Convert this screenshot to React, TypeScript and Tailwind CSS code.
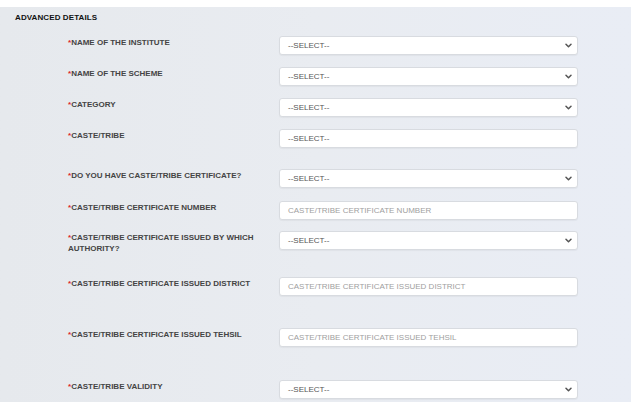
import React from "react";

type Row = {
  label: string;
  kind: "select" | "input" | "box";
  value: string;
  h: string;
};

const rows: Row[] = [
  { label: "NAME OF THE INSTITUTE", kind: "select", value: "--SELECT--", h: "h-[31px]" },
  { label: "NAME OF THE SCHEME", kind: "select", value: "--SELECT--", h: "h-[31px]" },
  { label: "CATEGORY", kind: "select", value: "--SELECT--", h: "h-[31px]" },
  { label: "CASTE/TRIBE", kind: "box", value: "--SELECT--", h: "h-[40px]" },
  { label: "DO YOU HAVE CASTE/TRIBE CERTIFICATE?", kind: "select", value: "--SELECT--", h: "h-[32px]" },
  { label: "CASTE/TRIBE CERTIFICATE NUMBER", kind: "input", value: "CASTE/TRIBE CERTIFICATE NUMBER", h: "h-[30px]" },
  { label: "CASTE/TRIBE CERTIFICATE ISSUED BY WHICH AUTHORITY?", kind: "select", value: "--SELECT--", h: "h-[46px]" },
  { label: "CASTE/TRIBE CERTIFICATE ISSUED DISTRICT", kind: "input", value: "CASTE/TRIBE CERTIFICATE ISSUED DISTRICT", h: "h-[51px]" },
  { label: "CASTE/TRIBE CERTIFICATE ISSUED TEHSIL", kind: "input", value: "CASTE/TRIBE CERTIFICATE ISSUED TEHSIL", h: "h-[52px]" },
  { label: "CASTE/TRIBE VALIDITY", kind: "select", value: "--SELECT--", h: "h-[30px]" },
];

function Chevron() {
  return (
    <svg width="7" height="5" viewBox="0 0 7 5" className="shrink-0">
      <path d="M1 1.2 L3.5 3.7 L6 1.2" fill="none" stroke="#555" strokeWidth="1.5" strokeLinecap="round" strokeLinejoin="round" />
    </svg>
  );
}

export default function App() {
  return (
    <div
      className="w-[631px] h-[402px] overflow-hidden bg-white pt-[7px]"
      style={{ fontFamily: '"Liberation Sans", Arial, sans-serif' }}
    >
      <div className="h-full bg-gradient-to-r from-[#e6e9ed] via-[#e9ecf1] to-[#e9edf5] pt-[5px]">
        <div className="pl-[15px] text-[8px] leading-[12px] font-bold text-[#111] tracking-[0.1px]">
          ADVANCED DETAILS
        </div>
        <div className="mt-[12px] flex flex-col">
          {rows.map((r) => (
            <div key={r.label} className={`flex items-start ${r.h}`}>
              <div className="ml-[68px] w-[190px] pt-[1px] text-[8px] leading-[11px] font-bold text-[#444]">
                <span className="text-[#e0262b]">*</span>
                {r.label}
              </div>
              <div className="ml-[21px] w-[299px] h-[19px] bg-white border border-[#d8dbe0] rounded-[3px] flex items-center pl-[8px] pr-[5px] shadow-[0_1px_1px_rgba(0,0,0,0.04)]">
                <span
                  className={`flex-1 text-[8px] leading-[10px] ${
                    r.kind === "input" ? "text-[#a0a0a0]" : "text-[#555]"
                  }`}
                >
                  {r.value}
                </span>
                {r.kind === "select" && <Chevron />}
              </div>
            </div>
          ))}
        </div>
      </div>
    </div>
  );
}
